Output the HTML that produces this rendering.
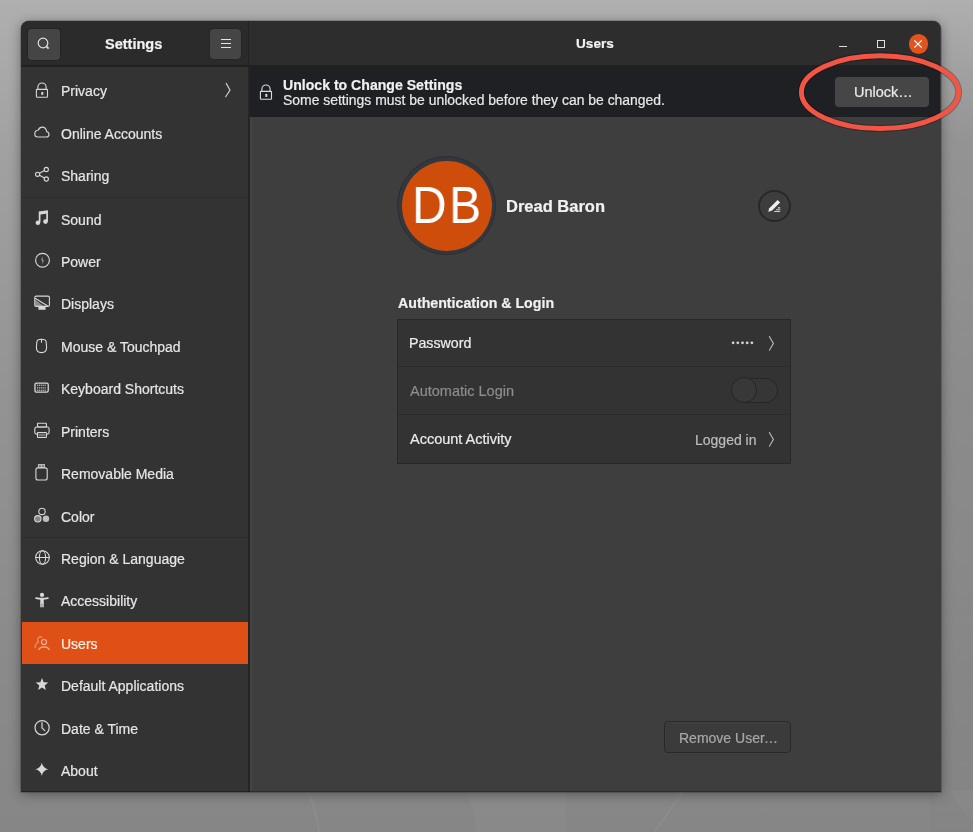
<!DOCTYPE html>
<html><head><meta charset="utf-8">
<style>
*{margin:0;padding:0;box-sizing:border-box}
html,body{width:973px;height:832px;overflow:hidden}
body{position:relative;font-family:"Liberation Sans",sans-serif;background:#9a9a9a}
.a{position:absolute}
.t{position:absolute;white-space:nowrap;line-height:1;will-change:transform;-webkit-text-stroke:0.2px currentColor}
</style></head><body>

<div class="a" style="left:0;top:0;width:973px;height:832px;background:linear-gradient(180deg,#afafaf 0%,#a1a1a1 18%,#939393 48%,#898989 84%,#868686 100%)"></div>
<div class="a" style="left:930px;top:0;width:43px;height:832px;background:linear-gradient(180deg,rgba(0,0,0,0) 0px,rgba(0,0,0,0.09) 140px,rgba(0,0,0,0.05) 420px,rgba(0,0,0,0.01) 832px)"></div>
<svg class="a" style="left:0;top:0" width="973" height="832"><path d="M308 790Q316 810 319 832" stroke="#ffffff" stroke-opacity="0.05" stroke-width="2" fill="none"/><path d="M466 790Q474 810 476 832H566V790z" fill="#ffffff" fill-opacity="0.03"/><path d="M682 792L655 832" stroke="#ffffff" stroke-opacity="0.05" stroke-width="1.5" fill="none"/><path d="M950 790Q960 812 973 820V790z" fill="#ffffff" fill-opacity="0.03"/></svg>
<div class="a" style="left:21px;top:21px;width:919.5px;height:771px;border-radius:8px 8px 0 0;box-shadow:0 0 0 0.5px rgba(0,0,0,.35),0 2px 12px 0px rgba(0,0,0,.38);background:#3e3e3e"></div>
<div class="a" style="left:21px;top:21px;width:227px;height:44px;background:#2b2b2b;border-radius:8px 0 0 0"></div>
<div class="a" style="left:248px;top:21px;width:692px;height:44px;background:#2d2d2d;border-radius:0 8px 0 0"></div>
<div class="a" style="left:21px;top:65px;width:919px;height:2px;background:#212121"></div>
<div class="a" style="left:247.5px;top:21px;width:1.5px;height:44px;background:#222222"></div>
<div class="a" style="left:21px;top:67px;width:227px;height:724.5px;background:#333333"></div>
<div class="a" style="left:248px;top:67px;width:1.5px;height:724.5px;background:#252525"></div><div class="a" style="left:249.5px;top:117px;width:2px;height:674px;background:#444444"></div>
<div class="a" style="left:21px;top:196.8px;width:227px;height:1px;background:#2d2d2d"></div>
<div class="a" style="left:21px;top:536.5px;width:227px;height:1px;background:#2d2d2d"></div>
<div class="a" style="left:21px;top:791px;width:919.5px;height:1px;background:rgba(0,0,0,0.3)"></div>
<div class="a" style="left:22px;top:622.2px;width:226px;height:41.8px;background:#df5016"></div>
<svg class="a" style="left:34px;top:82.1px;overflow:visible" width="16" height="16" viewBox="0 0 16 16" fill="none" stroke="#d8d8d8" stroke-width="1.1" stroke-linecap="round" stroke-linejoin="round"><rect x="2.4" y="7.4" width="11.1" height="7.9" rx="0.7"/><path d="M3.9 7.4V5.1a4.1 4.1 0 0 1 8.2 0V7.4"/><rect x="7.3" y="9.9" width="2" height="3" fill="#d8d8d8" stroke="none"/></svg>
<div class="t" style="left:60.5px;top:84.2px;font-size:14px;color:#e6e6e6">Privacy</div>
<svg class="a" style="left:34px;top:124.5px;overflow:visible" width="16" height="16" viewBox="0 0 16 16" fill="none" stroke="#d8d8d8" stroke-width="1.1" stroke-linecap="round" stroke-linejoin="round"><path d="M3.6 12H12.3C13.9 12 15 10.9 15 9.4 15 8 14 6.9 12.7 6.7 12.2 4 10.5 2.1 8.3 2.1 6.4 2.1 5 3.3 4.4 5 2.3 5.2 0.8 6.9 0.8 8.7 0.8 10.6 2 12 3.6 12z"/></svg>
<div class="t" style="left:60.5px;top:126.6px;font-size:14px;color:#e6e6e6">Online Accounts</div>
<svg class="a" style="left:34px;top:167.0px;overflow:visible" width="16" height="16" viewBox="0 0 16 16" fill="none" stroke="#d8d8d8" stroke-width="1.1" stroke-linecap="round" stroke-linejoin="round"><circle cx="3.6" cy="7.3" r="2.1"/><circle cx="12.3" cy="2.5" r="2.1"/><circle cx="12.3" cy="12" r="2.1"/><path d="M5.5 6.3l4.9-2.7M5.5 8.3l4.9 2.7"/></svg>
<div class="t" style="left:60.5px;top:169.1px;font-size:14px;color:#e6e6e6">Sharing</div>
<svg class="a" style="left:34px;top:210.4px;overflow:visible" width="16" height="16" viewBox="0 0 16 16" fill="none" stroke="#d8d8d8" stroke-width="1.1" stroke-linecap="round" stroke-linejoin="round"><path d="M5.6 12.4V2.3l7.5-1.1V11.4" stroke-width="1.7" stroke-linecap="butt" stroke-linejoin="miter"/><path d="M5.2 2.6l7.9-1.2v2.2l-7.9 1.2z" fill="#d8d8d8" stroke="none"/><circle cx="3.9" cy="12.7" r="2.3" fill="#d8d8d8" stroke="none"/><circle cx="11.5" cy="11.6" r="2.3" fill="#d8d8d8" stroke="none"/></svg>
<div class="t" style="left:60.5px;top:212.5px;font-size:14px;color:#e6e6e6">Sound</div>
<svg class="a" style="left:34px;top:252.8px;overflow:visible" width="16" height="16" viewBox="0 0 16 16" fill="none" stroke="#d8d8d8" stroke-width="1.1" stroke-linecap="round" stroke-linejoin="round"><circle cx="8.5" cy="7.2" r="6.9" stroke-width="1.15"/><path d="M8.3 3.2L7.4 7.3 8.5 7.2 8.7 11.3 9.6 7.1 8.5 7.2z" fill="#d8d8d8" stroke="none"/></svg>
<div class="t" style="left:60.5px;top:254.9px;font-size:14px;color:#e6e6e6">Power</div>
<svg class="a" style="left:34px;top:295.3px;overflow:visible" width="16" height="16" viewBox="0 0 16 16" fill="none" stroke="#d8d8d8" stroke-width="1.1" stroke-linecap="round" stroke-linejoin="round"><rect x="0.8" y="1.1" width="14.6" height="10.3" rx="1.4"/><path d="M1.5 3.5L13.3 10.7"/><path d="M1.2 4.8L9.6 11H1.2z" fill="#d8d8d8" fill-opacity="0.55" stroke="none"/><rect x="4.4" y="12.1" width="7.2" height="2.6" rx="0.5" fill="#d8d8d8" stroke="none"/></svg>
<div class="t" style="left:60.5px;top:297.4px;font-size:14px;color:#e6e6e6">Displays</div>
<svg class="a" style="left:34px;top:337.7px;overflow:visible" width="16" height="16" viewBox="0 0 16 16" fill="none" stroke="#d8d8d8" stroke-width="1.1" stroke-linecap="round" stroke-linejoin="round"><path d="M7.5 1.2C4.5 1.2 3 1.8 2.8 4L2.4 9.5C2.4 12.6 4.6 14.6 7.5 14.6S12.6 12.6 12.6 9.5L12.2 4C12 1.8 10.5 1.2 7.5 1.2z"/><path d="M7.5 1.3v3"/></svg>
<div class="t" style="left:60.5px;top:339.8px;font-size:14px;color:#e6e6e6">Mouse &amp; Touchpad</div>
<svg class="a" style="left:34px;top:380.2px;overflow:visible" width="16" height="16" viewBox="0 0 16 16" fill="none" stroke="#d8d8d8" stroke-width="1.1" stroke-linecap="round" stroke-linejoin="round"><rect x="0.95" y="3.05" width="13.3" height="9.1" rx="1.6" stroke-width="1.3"/><rect x="2.90" y="4.60" width="1.2" height="1.4" fill="#d8d8d8" fill-opacity="0.75" stroke="none"/><rect x="4.80" y="4.60" width="1.2" height="1.4" fill="#d8d8d8" fill-opacity="0.75" stroke="none"/><rect x="6.70" y="4.60" width="1.2" height="1.4" fill="#d8d8d8" fill-opacity="0.75" stroke="none"/><rect x="8.60" y="4.60" width="1.2" height="1.4" fill="#d8d8d8" fill-opacity="0.75" stroke="none"/><rect x="10.50" y="4.60" width="1.2" height="1.4" fill="#d8d8d8" fill-opacity="0.75" stroke="none"/><rect x="2.90" y="7.10" width="1.2" height="1.4" fill="#d8d8d8" fill-opacity="0.75" stroke="none"/><rect x="4.80" y="7.10" width="1.2" height="1.4" fill="#d8d8d8" fill-opacity="0.75" stroke="none"/><rect x="6.70" y="7.10" width="1.2" height="1.4" fill="#d8d8d8" fill-opacity="0.75" stroke="none"/><rect x="8.60" y="7.10" width="1.2" height="1.4" fill="#d8d8d8" fill-opacity="0.75" stroke="none"/><rect x="10.50" y="7.10" width="1.2" height="1.4" fill="#d8d8d8" fill-opacity="0.75" stroke="none"/><rect x="2.90" y="9.60" width="1.2" height="1.4" fill="#d8d8d8" fill-opacity="0.75" stroke="none"/><rect x="4.80" y="9.60" width="1.2" height="1.4" fill="#d8d8d8" fill-opacity="0.75" stroke="none"/><rect x="6.70" y="9.60" width="1.2" height="1.4" fill="#d8d8d8" fill-opacity="0.75" stroke="none"/><rect x="8.60" y="9.60" width="1.2" height="1.4" fill="#d8d8d8" fill-opacity="0.75" stroke="none"/><rect x="10.50" y="9.60" width="1.2" height="1.4" fill="#d8d8d8" fill-opacity="0.75" stroke="none"/></svg>
<div class="t" style="left:60.5px;top:382.3px;font-size:14px;color:#e6e6e6">Keyboard Shortcuts</div>
<svg class="a" style="left:34px;top:422.6px;overflow:visible" width="16" height="16" viewBox="0 0 16 16" fill="none" stroke="#d8d8d8" stroke-width="1.1" stroke-linecap="round" stroke-linejoin="round"><rect x="3.5" y="0.3" width="8.9" height="3.7" rx="0.4"/><path d="M3.2 11.1H2.6A1.8 1.8 0 0 1 0.8 9.3V5.8A1.8 1.8 0 0 1 2.6 4H13.3A1.8 1.8 0 0 1 15.1 5.8V9.3A1.8 1.8 0 0 1 13.3 11.1H12.7"/><rect x="3.5" y="9.5" width="8.9" height="5" rx="0.4"/><rect x="4.5" y="10.5" width="6.9" height="3" fill="#d8d8d8" fill-opacity="0.4" stroke="none"/></svg>
<div class="t" style="left:60.5px;top:424.7px;font-size:14px;color:#e6e6e6">Printers</div>
<svg class="a" style="left:34px;top:465.0px;overflow:visible" width="16" height="16" viewBox="0 0 16 16" fill="none" stroke="#d8d8d8" stroke-width="1.1" stroke-linecap="round" stroke-linejoin="round"><rect x="1.9" y="2.9" width="11.3" height="12.1" rx="2"/><rect x="3.9" y="-1" width="7.1" height="3.9" fill="#d8d8d8" stroke="none" fill-opacity="0.8"/><rect x="5.3" y="0.5" width="1.3" height="1.3" fill="#333" stroke="none"/><rect x="8.3" y="0.5" width="1.3" height="1.3" fill="#333" stroke="none"/></svg>
<div class="t" style="left:60.5px;top:467.1px;font-size:14px;color:#e6e6e6">Removable Media</div>
<svg class="a" style="left:34px;top:507.5px;overflow:visible" width="16" height="16" viewBox="0 0 16 16" fill="none" stroke="#d8d8d8" stroke-width="1.1" stroke-linecap="round" stroke-linejoin="round"><circle cx="8" cy="3.4" r="3.2"/><circle cx="3.8" cy="10.8" r="3.2" fill="#d8d8d8" fill-opacity="0.5"/><circle cx="12" cy="10.8" r="3.2" fill="#d8d8d8" stroke="none" fill-opacity="0.85"/></svg>
<div class="t" style="left:60.5px;top:509.6px;font-size:14px;color:#e6e6e6">Color</div>
<svg class="a" style="left:34px;top:549.9px;overflow:visible" width="16" height="16" viewBox="0 0 16 16" fill="none" stroke="#d8d8d8" stroke-width="1.1" stroke-linecap="round" stroke-linejoin="round"><circle cx="8.5" cy="7.5" r="6.8"/><ellipse cx="8.5" cy="7.5" rx="3.1" ry="6.8"/><path d="M1.7 7.5h13.6"/></svg>
<div class="t" style="left:60.5px;top:552.0px;font-size:14px;color:#e6e6e6">Region &amp; Language</div>
<svg class="a" style="left:34px;top:592.3px;overflow:visible" width="16" height="16" viewBox="0 0 16 16" fill="none" stroke="#d8d8d8" stroke-width="1.1" stroke-linecap="round" stroke-linejoin="round"><circle cx="8" cy="2.9" r="2.1" fill="#d8d8d8" stroke="none"/><path d="M2.2 6.1C4.5 6.6 6 6.7 8 6.7S11.5 6.6 13.8 6.1" stroke-width="1.9"/><path d="M6.2 6.7H9.8L9.6 11.6H6.4z" fill="#d8d8d8" stroke="none"/><path d="M7 11v3.7M9 11v3.7" stroke-width="1.5"/></svg>
<div class="t" style="left:60.5px;top:594.4px;font-size:14px;color:#e6e6e6">Accessibility</div>
<svg class="a" style="left:34px;top:634.8px;overflow:visible" width="16" height="16" viewBox="0 0 16 16" fill="none" stroke="#f3b49a" stroke-width="1.1" stroke-linecap="round" stroke-linejoin="round"><circle cx="10" cy="7" r="2.5" stroke-width="1.15"/><path d="M4.8 14.4C5.6 12.8 7.6 11.8 10 11.8S14.4 12.8 15.2 14.4" stroke-width="1.2"/><path d="M7.8 2.2C6 1.2 3.7 2.2 3.7 4.6 3.7 5.6 4 6.3 4.5 6.9 2.7 7.6 1.4 9.4 1.1 12.6" stroke-opacity="0.6" stroke-width="1.35"/></svg>
<div class="t" style="left:60.5px;top:636.9px;font-size:14px;color:#fff1e8">Users</div>
<svg class="a" style="left:34px;top:677.2px;overflow:visible" width="16" height="16" viewBox="0 0 16 16" fill="none" stroke="#d8d8d8" stroke-width="1.1" stroke-linecap="round" stroke-linejoin="round"><path d="M8 1.0L9.65 5.33 14.28 5.56 10.66 8.47 11.88 12.94 8 10.4 4.12 12.94 5.34 8.47 1.72 5.56 6.35 5.33z" fill="#d8d8d8" stroke="none" stroke="#d8d8d8" stroke-width="0.8"/></svg>
<div class="t" style="left:60.5px;top:679.3px;font-size:14px;color:#e6e6e6">Default Applications</div>
<svg class="a" style="left:34px;top:719.7px;overflow:visible" width="16" height="16" viewBox="0 0 16 16" fill="none" stroke="#d8d8d8" stroke-width="1.1" stroke-linecap="round" stroke-linejoin="round"><circle cx="8.1" cy="7.7" r="7.1" stroke-width="1.2"/><path d="M8 2.7V7.8L10.8 10.6" stroke-width="1.2"/></svg>
<div class="t" style="left:60.5px;top:721.8px;font-size:14px;color:#e6e6e6">Date &amp; Time</div>
<svg class="a" style="left:34px;top:762.1px;overflow:visible" width="16" height="16" viewBox="0 0 16 16" fill="none" stroke="#d8d8d8" stroke-width="1.1" stroke-linecap="round" stroke-linejoin="round"><path d="M7.8 0.8Q8.9 6.2 14.3 7.3 8.9 8.4 7.8 13.8 6.7 8.4 1.3 7.3 6.7 6.2 7.8 0.8z" fill="#d8d8d8" stroke="none"/></svg>
<div class="t" style="left:60.5px;top:764.2px;font-size:14px;color:#e6e6e6">About</div>
<svg class="a" style="left:0;top:0" width="973" height="832" fill="none" stroke-width="1.15" stroke-linecap="round" stroke-linejoin="round"><path d="M226.2 83.4L230 90.1 225.7 96.7" stroke="#cccccc"/></svg>
<div class="a" style="left:28px;top:29px;width:32px;height:31px;background:#454545;border-radius:4px;box-shadow:0 0 0 1px #262626"></div>
<svg class="a" style="left:36px;top:36px" width="16" height="16" viewBox="0 0 16 16" fill="none" stroke="#e0e0e0"><circle cx="7" cy="7" r="4.8" stroke-width="1.2"/><path d="M10.4 10.4l2.2 2.2" stroke-width="1.8"/></svg>
<div class="t" style="left:105px;top:37px;font-size:14.5px;font-weight:bold;color:#f2f2f2">Settings</div>
<div class="a" style="left:210px;top:29px;width:31px;height:30px;background:#454545;border-radius:4px;box-shadow:0 0 0 1px #262626"></div>
<div class="a" style="left:221px;top:38.6px;width:9.6px;height:1.2px;background:#e4e4e4"></div><div class="a" style="left:221px;top:42.8px;width:9.6px;height:1.2px;background:#e4e4e4"></div><div class="a" style="left:221px;top:46.9px;width:9.6px;height:1.2px;background:#e4e4e4"></div>
<div class="t" style="left:575.5px;top:36.6px;font-size:13.6px;font-weight:bold;color:#f2f2f2">Users</div>
<div class="a" style="left:839px;top:46px;width:8px;height:1.2px;background:#e0e0e0"></div>
<div class="a" style="left:876.8px;top:40px;width:8px;height:8px;border:1.1px solid #e0e0e0"></div>
<div class="a" style="left:908.5px;top:34px;width:19.5px;height:19.5px;border-radius:50%;background:#e2541f"></div>
<svg class="a" style="left:912.4px;top:37.7px" width="12" height="12" viewBox="0 0 12 12" fill="none" stroke="#fff" stroke-width="1.2"><path d="M2.3 2.3l7.4 7.4M9.7 2.3l-7.4 7.4"/></svg>
<div class="a" style="left:249.5px;top:67px;width:690.5px;height:49.6px;background:#1e2023"></div>
<svg class="a" style="left:257.5px;top:83.5px;overflow:visible" width="16" height="16" viewBox="0 0 16 16" fill="none" stroke="#dcdcdc" stroke-width="1.1" stroke-linecap="round" stroke-linejoin="round"><rect x="2.4" y="7.4" width="11.1" height="7.9" rx="0.7"/><path d="M3.9 7.4V5.1a4.1 4.1 0 0 1 8.2 0V7.4"/><rect x="7.3" y="9.9" width="2" height="3" fill="#dcdcdc" stroke="none"/></svg>
<div class="t" style="left:283px;top:77.5px;font-size:14.1px;font-weight:bold;color:#f0f0f0">Unlock to Change Settings</div>
<div class="t" style="left:283px;top:93.5px;font-size:13.95px;color:#e8e8e8">Some settings must be unlocked before they can be changed.</div>
<div class="a" style="left:835px;top:77px;width:94px;height:30px;background:#464646;border-radius:4px"></div>
<div class="t" style="left:854px;top:85px;font-size:14.5px;color:#ececec">Unlock…</div>
<div class="a" style="left:397px;top:156px;width:99px;height:99px;border-radius:50%;background:#34383d;border:1.3px solid #2a2e34"></div>
<div class="a" style="left:401.5px;top:160.5px;width:90px;height:90px;border-radius:50%;background:#cf4d0b"></div>
<div class="t" style="left:412px;top:179.5px;font-size:51px;letter-spacing:2.6px;transform:scaleX(0.94);transform-origin:0 0;color:#ffffff;-webkit-text-stroke:0">DB</div>
<div class="t" style="left:505.5px;top:198px;font-size:16.5px;font-weight:bold;color:#f2f2f2">Dread Baron</div>
<div class="a" style="left:757.8px;top:189.6px;width:32.8px;height:32.8px;border-radius:50%;background:#3d3d3d;border:2.2px solid #282828"></div>
<svg class="a" style="left:0;top:0" width="973" height="832"><path d="M768.2 211.8L769.3 208.2 777.6 199.9 780.1 202.4 771.8 210.7z" fill="#eeeeee"/><path d="M777.8 207.9h2.4M775.9 209.7h4.3M774.1 211.5h6.1" stroke="#d0d0d0" stroke-width="1.1"/></svg>
<div class="t" style="left:397.5px;top:295.5px;font-size:14.2px;font-weight:bold;color:#f0f0f0">Authentication &amp; Login</div>
<div class="a" style="left:397px;top:319.3px;width:394px;height:144.5px;background:#333333;border:1px solid #282828"></div>
<div class="a" style="left:398px;top:366px;width:392px;height:1px;background:#2c2c2c"></div>
<div class="a" style="left:398px;top:414px;width:392px;height:1px;background:#2c2c2c"></div>
<div class="t" style="left:409px;top:336px;font-size:14.2px;color:#ececec">Password</div>
<svg class="a" style="left:0;top:0" width="973" height="832"><circle cx="733.10" cy="342.8" r="1.4" fill="#d4d4d4"/><circle cx="737.80" cy="342.8" r="1.4" fill="#d4d4d4"/><circle cx="742.50" cy="342.8" r="1.4" fill="#d4d4d4"/><circle cx="747.20" cy="342.8" r="1.4" fill="#d4d4d4"/><circle cx="751.90" cy="342.8" r="1.4" fill="#d4d4d4"/></svg>
<div class="t" style="left:409.5px;top:384px;font-size:14.5px;color:#8d8d8d">Automatic Login</div>
<div class="a" style="left:731.8px;top:378.4px;width:46px;height:24.6px;border-radius:12.3px;background:#363636;border:1.5px solid #262626"></div>
<div class="a" style="left:731.4px;top:377.4px;width:25.8px;height:25.8px;border-radius:50%;background:#383838;border:1.6px solid #262626"></div>
<div class="t" style="left:409.5px;top:432px;font-size:14.5px;color:#ececec">Account Activity</div>
<div class="t" style="left:694.5px;top:432.5px;font-size:14px;color:#bdbdbd">Logged in</div>
<div class="a" style="left:664px;top:721.3px;width:127px;height:31.7px;background:#3b3b3b;border:1.6px solid #292929;border-radius:4px;box-shadow:inset 0 1px 0 rgba(255,255,255,0.03)"></div>
<div class="t" style="left:678.5px;top:731px;font-size:14px;color:#a8a8a8">Remove User<span style="letter-spacing:0.6px">...</span></div>
<svg class="a" style="left:0;top:0" width="973" height="832" fill="none" stroke-width="1.15" stroke-linecap="round" stroke-linejoin="round"><path d="M769.4 336.6L773.4 343.4 769.4 350.2" stroke="#b0b0b0"/><path d="M769.4 432.6L773.4 439.4 769.4 446.2" stroke="#b0b0b0"/></svg>
<svg class="a" style="left:0;top:0" width="973" height="832"><ellipse cx="880" cy="92.2" rx="78.6" ry="36.4" fill="none" stroke="#000" stroke-opacity="0.3" stroke-width="7"/><ellipse cx="880" cy="92.2" rx="78.6" ry="36.4" fill="none" stroke="#f25545" stroke-width="5"/></svg>
</body></html>
